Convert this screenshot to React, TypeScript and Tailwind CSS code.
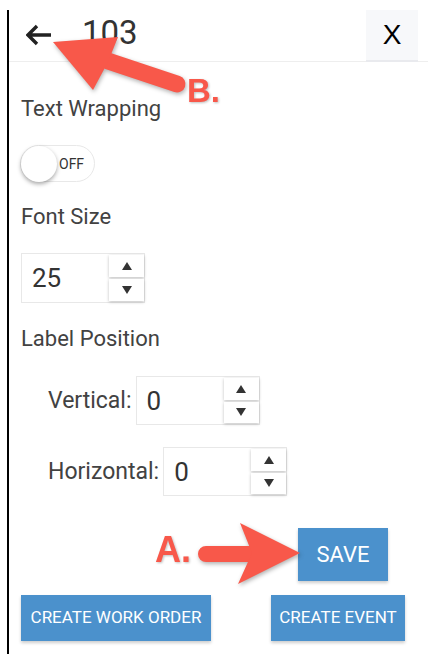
import React from 'react';

function Spinner() {
  return (
    <div className="absolute right-0 top-[1px] bottom-[1px] w-[35px] flex flex-col gap-[2px]">
      <div className="flex-1 bg-white shadow-[0_1px_3px_rgba(0,0,0,0.25)] flex items-center justify-center">
        <svg width="10" height="8" viewBox="0 0 10 8"><path d="M5 0 L10 8 L0 8 Z" fill="#333" /></svg>
      </div>
      <div className="flex-1 bg-white shadow-[0_1px_3px_rgba(0,0,0,0.25)] flex items-center justify-center">
        <svg width="10" height="8" viewBox="0 0 10 8"><path d="M0 0 L10 0 L5 8 Z" fill="#333" /></svg>
      </div>
    </div>
  );
}

function NumberBox({ value, h }: { value: string; h: string }) {
  return (
    <div className={`relative w-[124px] ${h} border border-[#e8e8e8] flex items-center pl-[10px]`}>
      <span className="text-[26px] text-[#333] leading-none">{value}</span>
      <Spinner />
    </div>
  );
}

function BlueButton({ label, className }: { label: string; className: string }) {
  return (
    <button className={`bg-[#4b91cc] text-white shadow-[0_2px_3px_rgba(0,0,0,0.2)] flex items-center justify-center ${className}`}>
      {label}
    </button>
  );
}

export default function App() {
  return (
    <div className="relative w-[428px] h-[654px] bg-white overflow-hidden font-['Roboto',sans-serif]">
      <div className="ml-[7px] mt-[10px] h-[644px] border-l-2 border-black flex flex-col">
        {/* header */}
        <div className="flex h-[52px] border-b border-[#eeeeee]">
          <div className="flex items-center pl-[17px]">
            <svg width="26" height="22" viewBox="0 0 26 22" className="mt-[-2px]">
              <path d="M11 2 L2 11 L11 20 M2 11 H25" stroke="#222" strokeWidth="3.4" fill="none" strokeLinecap="butt" strokeLinejoin="miter" />
            </svg>
            <span className="ml-[30px] text-[33px] leading-none text-[#333] mt-[-6px]">103</span>
          </div>
          <div className="ml-auto mr-[10px] w-[52px] h-[52px] bg-[#f7f8fa] border-b-2 border-[#e9eaee] flex items-center justify-center">
            <span className="font-['Liberation_Sans',sans-serif] text-[28px] text-black leading-none">X</span>
          </div>
        </div>

        <div className="pl-[12px] flex flex-col text-[#424242]">
          <div className="mt-[36px] text-[22px] leading-[22px]">Text Wrapping</div>

          <div className="mt-[25px] w-[75px] h-[37px] rounded-full border border-[#e8e8e8] flex items-center ml-[-1px]">
            <div className="w-[36px] h-[36px] rounded-full bg-white shadow-[0_2px_4px_rgba(0,0,0,0.35)]" />
            <span className="ml-[2px] text-[14px] text-[#333] leading-none">OFF</span>
          </div>

          <div className="mt-[24px] text-[22px] leading-[22px]">Font Size</div>

          <div className="mt-[25px]">
            <NumberBox value="25" h="h-[50px]" />
          </div>

          <div className="mt-[25px] text-[22px] leading-[22px]">Label Position</div>

          <div className="mt-[26px] pl-[27px] flex items-center gap-[4px]">
            <span className="text-[23px] leading-none">Vertical:</span>
            <NumberBox value="0" h="h-[49px]" />
          </div>

          <div className="mt-[22px] pl-[27px] flex items-center gap-[4px]">
            <span className="text-[23px] leading-none">Horizontal:</span>
            <NumberBox value="0" h="h-[49px]" />
          </div>

          <div className="mt-[32px] flex justify-end pr-[40px]">
            <BlueButton label="SAVE" className="w-[90px] h-[53px] text-[22px]" />
          </div>

          <div className="mt-[14px] flex justify-between pr-[23px]">
            <BlueButton label="CREATE WORK ORDER" className="w-[190px] h-[46px] text-[17px]" />
            <BlueButton label="CREATE EVENT" className="w-[134px] h-[46px] text-[17px]" />
          </div>
        </div>
      </div>

      {/* annotation overlay */}
      <svg className="absolute inset-0 pointer-events-none drop-shadow-[1px_2px_2px_rgba(0,0,0,0.3)]" width="428" height="654" viewBox="0 0 428 654">
        <line x1="177" y1="84" x2="108" y2="61" stroke="#f8584a" strokeWidth="17" strokeLinecap="round" />
        <path d="M53 42 L118 37 L108 62 L93 90 Z" fill="#f8584a" />
        <line x1="206" y1="554" x2="255" y2="554" stroke="#f8584a" strokeWidth="16" strokeLinecap="round" />
        <path d="M300 553 L240 523 L252 553 L238 584 Z" fill="#f8584a" />
      </svg>
      <span className="absolute left-[187px] top-[74px] font-['Liberation_Sans',sans-serif] font-bold text-[33px] leading-[33px] text-[#f8584a] drop-shadow-[1px_1px_1px_rgba(0,0,0,0.25)]">B.</span>
      <span className="absolute left-[155px] top-[532px] font-['Liberation_Sans',sans-serif] font-bold text-[36px] leading-[36px] text-[#f8584a] drop-shadow-[1px_1px_1px_rgba(0,0,0,0.25)]">A.</span>
    </div>
  );
}
